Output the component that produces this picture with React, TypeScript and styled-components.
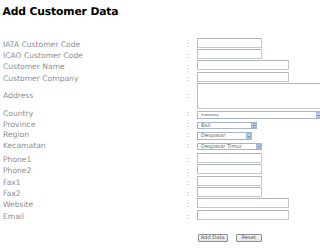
import React from 'react';
import styled, { createGlobalStyle } from 'styled-components';

type Field = {
  label: string;
  kind: 'text' | 'area' | 'select';
  width: number;
  value?: string;
  small?: boolean;
};

const fields: Field[] = [
  { label: 'IATA Customer Code', kind: 'text', width: 65 },
  { label: 'ICAO Customer Code', kind: 'text', width: 65 },
  { label: 'Customer Name', kind: 'text', width: 92 },
  { label: 'Customer Company', kind: 'text', width: 92 },
  { label: 'Address', kind: 'area', width: 134 },
  { label: 'Country', kind: 'select', width: 125, value: 'Indonesia', small: true },
  { label: 'Province', kind: 'select', width: 60, value: 'Bali' },
  { label: 'Region', kind: 'select', width: 55, value: 'Despasar' },
  { label: 'Kecamatan', kind: 'select', width: 65, value: 'Despasar Timur' },
  { label: 'Phone1', kind: 'text', width: 65 },
  { label: 'Phone2', kind: 'text', width: 65 },
  { label: 'Fax1', kind: 'text', width: 65 },
  { label: 'Fax2', kind: 'text', width: 65 },
  { label: 'Website', kind: 'text', width: 92 },
  { label: 'Email', kind: 'text', width: 92 },
];

const rowHeight = { text: 11.4, area: 27.6, select: 10.5 };
const labelOffset = { text: 4, area: 9.8, select: 0.3 };

const App: React.FC = () => {
  return (
    <Page>
      <GlobalStyle />
      <Title>Add Customer Data</Title>
      <Form>
        {fields.map((f) => (
          <Row key={f.label} $h={rowHeight[f.kind]}>
            <Label $offset={labelOffset[f.kind]}>{f.label}</Label>
            <Colon $offset={labelOffset[f.kind]}>:</Colon>
            <Control>
              {f.kind === 'text' && <TextBox $w={f.width} />}
              {f.kind === 'area' && <AreaBox $w={f.width} />}
              {f.kind === 'select' && (
                <SelectBox $w={f.width}>
                  <SelectText $small={!!f.small}>{f.value}</SelectText>
                  <Arrow>
                    <svg width="4" height="3" viewBox="0 0 4 3">
                      <path d="M0.4 0.5 L2 2.3 L3.6 0.5" fill="none" stroke="#3d5a8a" strokeWidth="0.9" />
                    </svg>
                  </Arrow>
                </SelectBox>
              )}
            </Control>
          </Row>
        ))}
        <ButtonRow>
          <Button $w={30}>Add Data</Button>
          <Button $w={26}>Reset</Button>
        </ButtonRow>
      </Form>
    </Page>
  );
};

const GlobalStyle = createGlobalStyle`
  html, body {
    margin: 0;
    padding: 0;
    background: #fff;
    overflow: hidden;
  }
  body {
    font-family: "DejaVu Sans", Verdana, sans-serif;
    text-rendering: geometricPrecision;
  }
`;

const Page = styled.div`
  width: 320px;
  height: 248px;
  overflow: hidden;
`;

const Title = styled.h1`
  margin: 5px 0 0 2.5px;
  font-size: 10.8px;
  line-height: 13px;
  font-weight: bold;
  letter-spacing: -0.15px;
  color: #000;
`;

const Form = styled.div`
  margin-top: 18.6px;
  padding-left: 3px;
`;

const Row = styled.div<{ $h: number }>`
  display: grid;
  grid-template-columns: 184px 10px auto;
  height: ${(p) => p.$h}px;
`;

const Label = styled.div<{ $offset: number }>`
  padding-top: ${(p) => p.$offset}px;
  font-size: 7.6px;
  line-height: 8px;
  color: #8e8e8e;
  white-space: nowrap;
`;

const Colon = styled(Label)`
  color: #a8a8a8;
`;

const Control = styled.div`
  display: flex;
  align-items: center;
`;

const TextBox = styled.div<{ $w: number }>`
  box-sizing: border-box;
  width: ${(p) => p.$w}px;
  height: 10px;
  border: 1px solid #c6c9cd;
  border-top-color: #b4b8bc;
  border-left-color: #b8bcc0;
  background: #fff;
`;

const AreaBox = styled(TextBox)`
  height: 25.4px;
`;

const SelectBox = styled.div<{ $w: number }>`
  box-sizing: border-box;
  width: ${(p) => p.$w}px;
  height: 7.5px;
  display: flex;
  align-items: center;
  justify-content: space-between;
  border: 1px solid #aab6c6;
  background: #fff;
  padding-left: 3px;
`;

const SelectText = styled.span<{ $small: boolean }>`
  font-size: ${(p) => (p.$small ? 3.7 : 5.2)}px;
  line-height: 6px;
  color: #666;
  white-space: nowrap;
`;

const Arrow = styled.span`
  box-sizing: border-box;
  width: 5.5px;
  height: 5.5px;
  display: flex;
  align-items: center;
  justify-content: center;
  background: #c9d8f0;
  border: 0.5px solid #a3b6d8;
`;

const ButtonRow = styled.div`
  display: flex;
  gap: 8px;
  margin-top: 14.3px;
  padding-left: 194.7px;
`;

const Button = styled.div<{ $w: number }>`
  box-sizing: border-box;
  width: ${(p) => p.$w}px;
  height: 8px;
  display: flex;
  align-items: center;
  justify-content: center;
  border: 1px solid #8e8e8e;
  border-radius: 1px;
  background: linear-gradient(#fafafa, #e4e4e4);
  font-size: 5.2px;
  color: #555;
  white-space: nowrap;
`;

export default App;
